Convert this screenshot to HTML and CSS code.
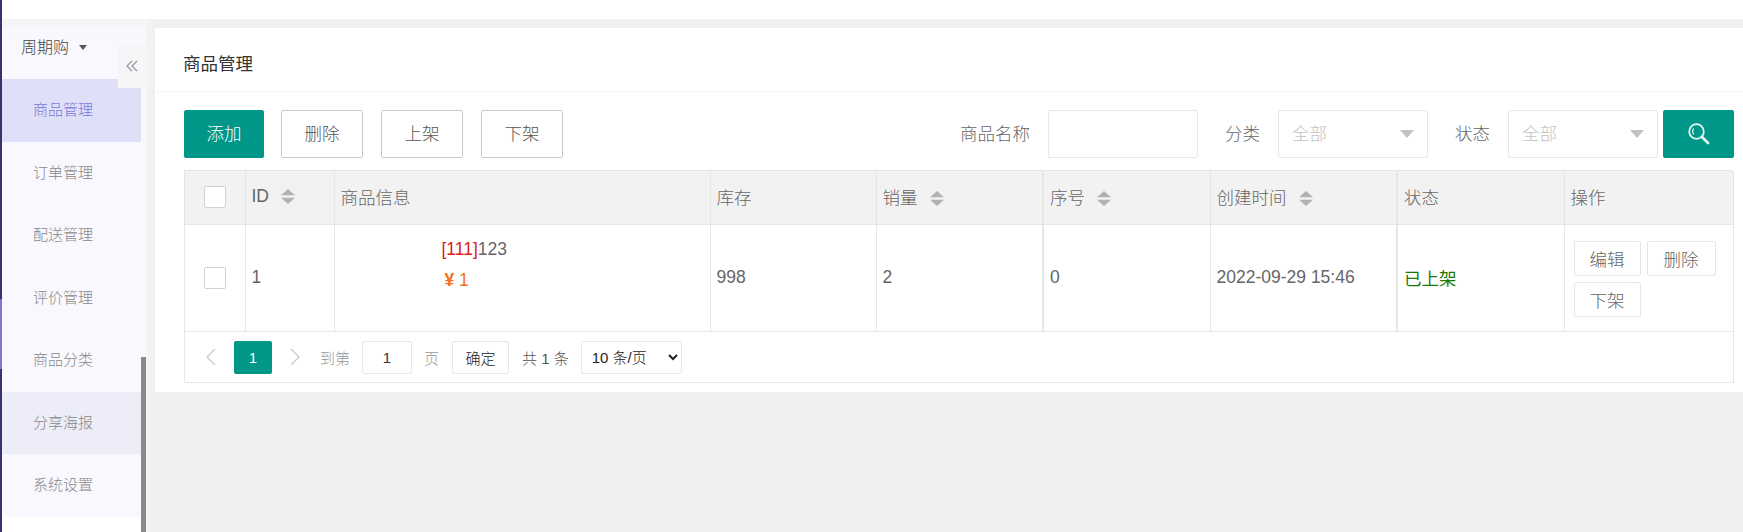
FILE: index.html
```html
<!DOCTYPE html>
<html lang="zh-CN">
<head>
  <meta charset="UTF-8" />
  <title>商品管理</title>
  <link rel="stylesheet" href="styles.css">
</head>
<body>

  <div class="edge">
    <div class="edge-mark"></div>
  </div>

  <div class="page">
    <div class="topbar"></div>

    <div class="frame">
      <aside class="sidebar">
        <div class="side-head">
          <span>周期购</span>
          <i class="caret"></i>
        </div>
        <a class="side-item active">商品管理</a>
        <a class="side-item">订单管理</a>
        <a class="side-item">配送管理</a>
        <a class="side-item">评价管理</a>
        <a class="side-item">商品分类</a>
        <a class="side-item hover">分享海报</a>
        <a class="side-item">系统设置</a>
        <div class="side-foot"></div>

        <div class="collapse">
          <svg width="12" height="12" viewBox="0 0 12 12" fill="none" stroke="#9a9a9e" stroke-width="1.3">
            <path d="M6 1 1 6l5 5M11 1 6 6l5 5"/>
          </svg>
        </div>
        <div class="scroll-thumb"></div>
      </aside>

      <main class="main">
        <section class="card">
          <div class="card-title">商品管理</div>

          <div class="card-body">
            <div class="toolbar">
              <div class="toolbar-left">
                <button class="btn btn-primary">添加</button>
                <button class="btn">删除</button>
                <button class="btn">上架</button>
                <button class="btn">下架</button>
              </div>
              <div class="filters">
                <label class="filter-label">商品名称</label>
                <input class="filter-input" type="text">
                <label class="filter-label label-next">分类</label>
                <div class="filter-select"><span>全部</span><i class="select-arrow"></i></div>
                <label class="filter-label label-next">状态</label>
                <div class="filter-select"><span>全部</span><i class="select-arrow"></i></div>
                <button class="btn-search">
                  <svg width="24" height="24" viewBox="0 0 24 24" fill="none" stroke="#e4f6f3">
                    <circle cx="9.5" cy="9.5" r="7.3" stroke-width="1.8"/>
                    <path d="M6.6 6.4c-1.3 2-1.2 4.3.2 6" stroke-width="1.2"/>
                    <path d="m15.5 15.5 5.5 5.5" stroke-width="2.8" stroke-linecap="round"/>
                  </svg>
                </button>
              </div>
            </div>

            <div class="table-box">
              <table class="goods-table">
                <colgroup>
                  <col class="col-check"><col class="col-id"><col class="col-info"><col class="col-stock">
                  <col class="col-sales"><col class="col-order"><col class="col-time"><col class="col-status"><col>
                </colgroup>
                <thead>
                  <tr>
                    <th class="cell-check"><i class="checkbox"></i></th>
                    <th>ID<svg class="sort" viewBox="0 0 14 15"><path d="M7 0l7 6.3H0zM7 15 0 8.7h14z"/></svg></th>
                    <th>商品信息</th>
                    <th>库存</th>
                    <th>销量<svg class="sort" viewBox="0 0 14 15"><path d="M7 0l7 6.3H0zM7 15 0 8.7h14z"/></svg></th>
                    <th class="line-thick">序号<svg class="sort" viewBox="0 0 14 15"><path d="M7 0l7 6.3H0zM7 15 0 8.7h14z"/></svg></th>
                    <th>创建时间<svg class="sort" viewBox="0 0 14 15"><path d="M7 0l7 6.3H0zM7 15 0 8.7h14z"/></svg></th>
                    <th class="line-thick">状态</th>
                    <th>操作</th>
                  </tr>
                </thead>
                <tbody>
                  <tr>
                    <td class="cell-check"><i class="checkbox"></i></td>
                    <td>1</td>
                    <td>
                      <div class="goods">
                        <p class="goods-name"><span class="goods-tag">[111]</span>123</p>
                        <p class="goods-price"><b>¥</b> 1</p>
                      </div>
                    </td>
                    <td>998</td>
                    <td>2</td>
                    <td class="line-thick">0</td>
                    <td>2022-09-29 15:46</td>
                    <td class="line-thick status-on">已上架</td>
                    <td>
                      <div class="row-actions">
                        <button class="btn-row">编辑</button>
                        <button class="btn-row">删除</button>
                        <button class="btn-row">下架</button>
                      </div>
                    </td>
                  </tr>
                </tbody>
              </table>

              <div class="pager">
                <svg class="pager-arrow" width="11" height="18" viewBox="0 0 11 18" fill="none" stroke="#c9c9c9" stroke-width="1.3"><path d="M10 1 2 9l8 8"/></svg>
                <span class="pager-current">1</span>
                <svg class="pager-arrow" width="11" height="18" viewBox="0 0 11 18" fill="none" stroke="#c9c9c9" stroke-width="1.3"><path d="m1 1 8 8-8 8"/></svg>
                <span class="pager-text pager-goto">到第</span>
                <input class="pager-input" type="text" value="1">
                <span class="pager-text">页</span>
                <button class="pager-ok">确定</button>
                <span class="pager-total">共 1 条</span>
                <select class="pager-size">
                  <option>10 条/页</option>
                </select>
              </div>
            </div>
          </div>
        </section>
      </main>
    </div>
  </div>

</body>
</html>
```

FILE: styles.css
```css
* {
  box-sizing: border-box;
}

html, body {
  margin: 0;
  padding: 0;
  height: 100%;
  overflow: hidden;
  font-family: "Liberation Sans", "Noto Sans CJK SC", sans-serif;
  font-size: 17.5px;
  font-weight: 300;
  color: #666;
}

body {
  display: flex;
  background: #f0f0f0;
}

/* тонкая полоса слева */
.edge {
  width: 2px;
  background: #35346f;
  padding-top: 299px;
}

.edge-mark {
  height: 70px;
  background: #7d78d8;
}

.page {
  flex: 1;
  min-width: 0;
  display: flex;
  flex-direction: column;
}

.topbar {
  height: 19px;
  background: #fff;
}

.frame {
  flex: 1;
  display: flex;
}

/* sidebar */
.sidebar {
  position: relative;
  width: 144px;
  display: flex;
  flex-direction: column;
  background: #f8f8fe;
}

.side-head {
  height: 60px;
  padding: 10px 0 0 19px;
  display: flex;
  align-items: center;
  gap: 10px;
  background: linear-gradient(#f4f4f7, #f8f8fe 14px);
  font-size: 16px;
  color: #444;
}

.side-head span {
  margin-bottom: 16px;
}

.caret {
  margin-bottom: 14px;
  border-top: 5px solid #555;
  border-left: 4.5px solid transparent;
  border-right: 4.5px solid transparent;
}

.side-item {
  width: 139px;
  height: 62.5px;
  line-height: 62px;
  padding-left: 31px;
  font-size: 15px;
  color: #888;
}

.side-item.active {
  background: #dfdff8;
  color: #7b78dc;
}

.side-item.hover {
  background: #ecedf8;
}

.side-foot {
  flex: 1;
  background: #fff;
}

.collapse {
  position: absolute;
  left: 116px;
  top: 25px;
  width: 28px;
  height: 44px;
  background: #f6f6f8;
  display: flex;
  align-items: center;
  justify-content: center;
}

.scroll-thumb {
  position: absolute;
  left: 139px;
  top: 338px;
  bottom: 0;
  width: 5px;
  background: #8a8a8a;
}

/* main */
.main {
  flex: 1;
  min-width: 0;
  padding: 9px 0 0 9px;
  background: linear-gradient(90deg, #f4f4f6, #f0f0f0 9px);
}

.card {
  background: #fff;
  height: 364px;
}

.card-title {
  height: 64px;
  padding: 22px 0 0 28px;
  font-weight: 400;
  color: #333;
  border-bottom: 1px solid #f6f6f6;
}

.card-body {
  padding: 18px 9px 0 29px;
}

.toolbar {
  display: flex;
  justify-content: space-between;
  height: 48px;
  margin-bottom: 12px;
}

.toolbar-left {
  display: flex;
  gap: 18px;
}

.btn {
  width: 82px;
  height: 48px;
  padding: 0 0 4px;
  background: #fff;
  border: 1px solid #c9c9c9;
  border-radius: 2px;
  font: inherit;
  color: #555;
}

.btn-primary {
  width: 80px;
  margin-right: -1px;
  background: #009688;
  border-color: #009688;
  color: #fff;
}

.filters {
  display: flex;
  align-items: center;
}

.filter-label {
  margin-right: 18px;
  margin-bottom: 4px;
  color: #666;
}

.label-next {
  margin-left: 27px;
}

.filter-input {
  width: 150px;
  height: 48px;
  border: 1px solid #e6e6e6;
  border-radius: 2px;
  background: #fff;
}

.filter-select {
  width: 150px;
  height: 48px;
  padding: 0 13px 3px;
  border: 1px solid #e6e6e6;
  border-radius: 2px;
  display: flex;
  align-items: center;
  justify-content: space-between;
  color: #c2c2c2;
}

.select-arrow {
  margin-top: 3px;
  border-top: 8px solid #c2c2c2;
  border-left: 7px solid transparent;
  border-right: 7px solid transparent;
}

.btn-search {
  width: 71px;
  height: 48px;
  margin-left: 5px;
  padding: 0;
  background: #009688;
  border: 0;
  border-radius: 2px;
  display: flex;
  align-items: center;
  justify-content: center;
}

/* table */
.table-box {
  border: 1px solid #e6e6e6;
}

.goods-table {
  width: 100%;
  table-layout: fixed;
  border-collapse: collapse;
}

.col-check { width: 60px; }
.col-id { width: 89px; }
.col-info { width: 376px; }
.col-stock { width: 166px; }
.col-sales { width: 167px; }
.col-order { width: 167px; }
.col-time { width: 187px; }
.col-status { width: 167px; }

.goods-table th,
.goods-table td {
  padding: 0 6px;
  text-align: left;
  font-weight: 300;
  border: 1px solid #e6e6e6;
}

.goods-table tr > :first-child { border-left: 0; }
.goods-table tr > :last-child { border-right: 0; }

.goods-table th {
  height: 53px;
  padding-bottom: 2px;
  background: #f2f2f2;
  border-top: 0;
}

.goods-table td {
  height: 107px;
  border-top: 0;
  border-bottom: 1px solid #e6e6e6;
}

.goods-table .line-thick {
  border-left-width: 2px;
}

.goods-table .cell-check {
  padding: 0;
  text-align: center;
}

.checkbox {
  display: inline-block;
  width: 22px;
  height: 22px;
  vertical-align: middle;
  background: #fff;
  border: 1px solid #d2d2d2;
  border-radius: 2px;
}

.sort {
  width: 14px;
  height: 15px;
  margin-left: 12px;
  vertical-align: -2px;
  fill: #b2b2b2;
}

.goods {
  padding: 0 0 25px 101px;
}

.goods p {
  margin: 0;
  line-height: 31px;
}

.goods-tag {
  color: #e02020;
}

.goods-price {
  color: #f4701c;
  padding-left: 3px;
}

.goods-price b {
  font-weight: bold;
}

.goods-table .status-on {
  color: #1c7a08;
  font-weight: 400;
}

.row-actions {
  display: flex;
  flex-wrap: wrap;
  gap: 6px;
  padding: 2px 0 0 3px;
}

.btn-row {
  width: 67px;
  height: 35px;
  padding: 0;
  background: #fff;
  border: 1px solid #e6e6e6;
  border-radius: 2px;
  font: inherit;
  color: #666;
}

.btn-row:nth-child(2) {
  width: 69px;
}

/* pager */
.pager {
  height: 50px;
  padding: 1px 0 0 20px;
  display: flex;
  align-items: center;
  font-size: 15px;
}

.pager-current {
  width: 38px;
  height: 33px;
  margin: 0 18px;
  background: #009688;
  border-radius: 2px;
  color: #fff;
  line-height: 33px;
  text-align: center;
}

.pager-text {
  color: #999;
}

.pager-goto {
  margin-left: 19px;
}

.pager-input {
  width: 50px;
  height: 33px;
  margin: 0 12px;
  padding: 0;
  border: 1px solid #e6e6e6;
  border-radius: 2px;
  font: inherit;
  color: #333;
  text-align: center;
}

.pager-ok {
  width: 57px;
  height: 33px;
  margin-left: 13px;
  padding: 0;
  background: #fff;
  border: 1px solid #e6e6e6;
  border-radius: 2px;
  font: inherit;
  font-size: 15px;
  color: #222;
}

.pager-total {
  margin: 0 12px 0 13px;
  color: #555;
}

.pager-size {
  width: 101px;
  height: 33px;
  padding-left: 6px;
  background: #fff;
  border: 1px solid #e6e6e6;
  border-radius: 2px;
  font: inherit;
  color: #222;
}
```
